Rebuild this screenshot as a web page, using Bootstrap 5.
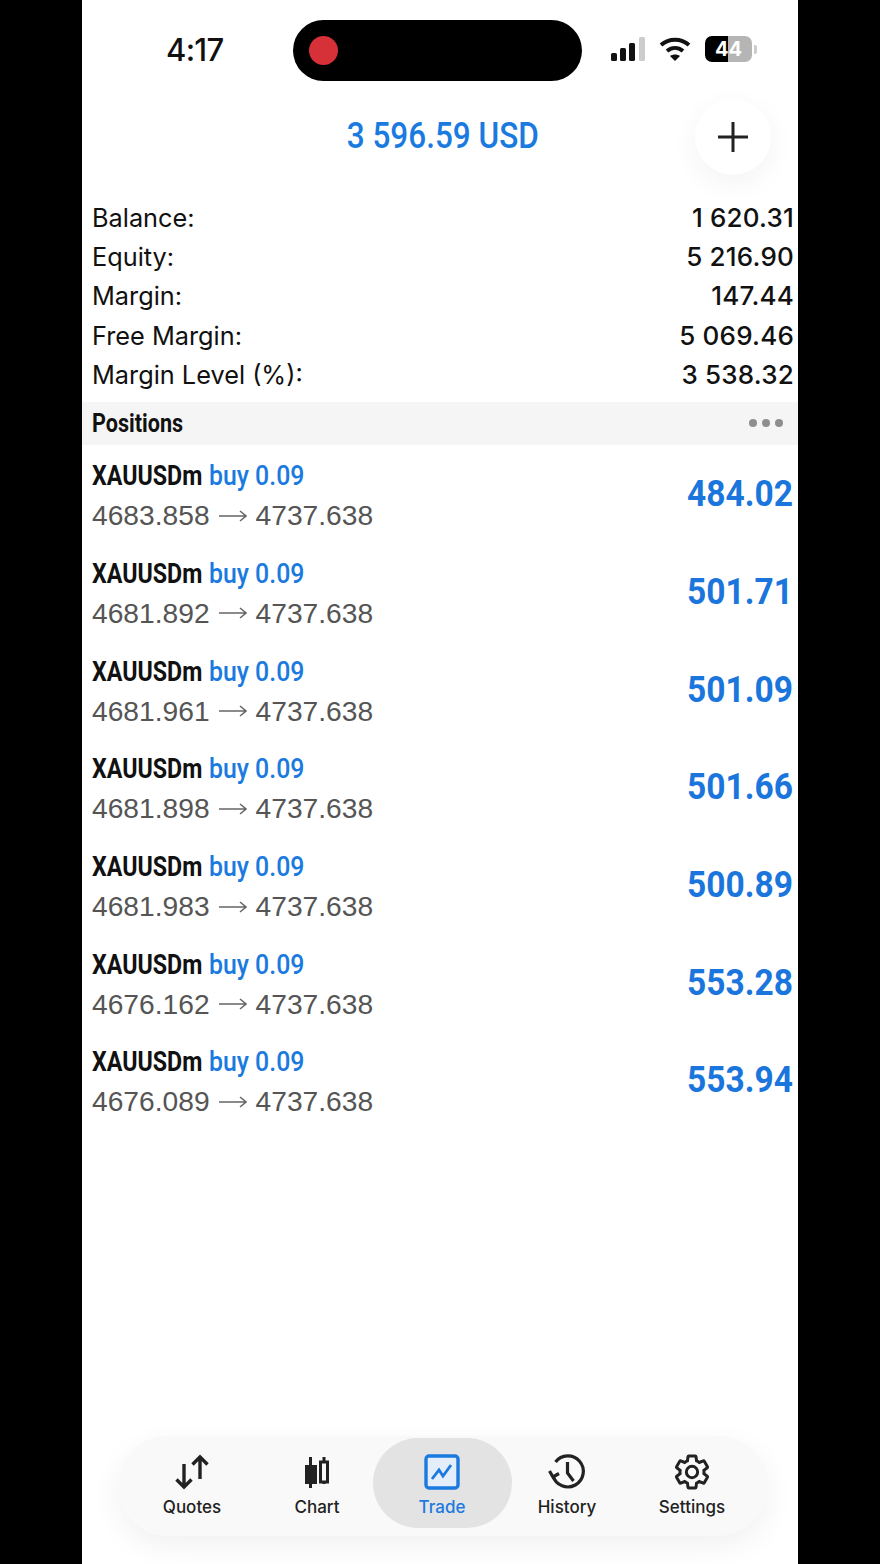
<!DOCTYPE html>
<html lang="en">
  <head>
    <meta charset="UTF-8" />
    <meta name="viewport" content="width=device-width, initial-scale=1.0" />
    <title>Trade</title>
    <link href="https://cdn.jsdelivr.net/npm/bootstrap@5.3.0/dist/css/bootstrap.min.css" rel="stylesheet" />
    <style>
      html, body { height: 100%; }
      body { background: #000; overflow: hidden; font-family: "Liberation Sans", Arial, sans-serif; }
      .phone { width: 716px; height: 1564px; margin-left: 82px; background: #fff; color: #111; }
      .status-bar { height: 100px; padding: 20px 38px 19px 84px; }
      .clock { width: 127px; height: 59px; font: 500 31px Inter, sans-serif; letter-spacing: -.7px; }
      .island { width: 289px; height: 61px; border-radius: 31px; background: #000; padding-left: 16px; }
      .rec-dot { width: 29px; height: 29px; border-radius: 50%; background: #d63038; }
      .status-icons { height: 58px; margin-left: 29px; gap: 12px; }
      .batt-wrap { margin-left: 2px; }
      .batt { width: 47px; height: 26px; border-radius: 7px; background: linear-gradient(90deg, #000 48%, #b5b5b5 48%); color: #fff; font: 700 20px/26px Inter, sans-serif; text-align: center; }
      .batt-tip { width: 3px; height: 9px; background: #ccc; border-radius: 0 2px 2px 0; margin-left: 2px; }
      .head-row { height: 72px; padding-left: 251px; }
      .total { width: 219px; white-space: nowrap; font: 500 36px Roboto, sans-serif; color: #1a7ae0; transform: scaleX(.875); }
      .add-btn { width: 76px; height: 76px; border: 0; border-radius: 50%; background: #fff; box-shadow: 0 8px 28px rgba(0, 0, 0, .05); padding: 0; margin: 2px 0 0 143px; }
      .summary { padding: 20px 5px 0 10px; margin-top: 6px; }
      .sum-line { height: 39.2px; font: 400 25.3px/39px Inter, sans-serif; }
      .sum-val { font-size: 26px; letter-spacing: .2px; font-weight: 500; margin-right: -1px; }
      .pos-head { height: 43px; margin-top: 8px; background: #f5f5f5; padding: 0 15px 0 10px; }
      .pos-title { font: 700 26px Roboto, sans-serif; transform: scaleX(.83); transform-origin: left; width: 91px; white-space: nowrap; }
      .dots { gap: 5px; }
      .dots i { width: 8px; height: 8px; border-radius: 50%; background: #8e8e8e; }
      .pos-list { padding-top: 2px; }
      .pos-row { height: 97.7px; padding: 0 5px 0 10px; }
      .sym { gap: 7px; height: 39px; margin-top: 1px; white-space: nowrap; font: 700 27px/39px Roboto, sans-serif; }
      .sym-name { width: 110px; transform: scaleX(.86); transform-origin: left; }
      .buy { width: 95px; font-weight: 500; color: #1a7ae0; transform: scaleX(.92); transform-origin: left; }
      .rate { gap: 9px; font: 400 28.2px/39px "Liberation Sans", Arial, sans-serif; color: #555; }
      .profit { white-space: nowrap; text-align: right; font: 700 37px Roboto, sans-serif; color: #1a75dc; margin-top: -4px; }
      .profit span { display: inline-block; transform: scaleX(.905); transform-origin: right; }
      .tabbar { margin: 0 30px 28px 36px; height: 100px; border-radius: 50px; background: #f9f9f9; box-shadow: 0 10px 30px rgba(0, 0, 0, .06); padding: 2px 0 0 11.5px; }
      .tab { flex: 0 0 125px; height: 90px; gap: 5px; color: #222; font: 500 17px Inter, sans-serif; border-radius: 45px; padding-top: 2px; }
      .tab.on { flex: 0 0 139px; margin: 0 -7px; background: #e3e3e3; color: #1a7ae0; }
      .tab svg { width: 40px; height: 40px; }
    </style>
  </head>
  <body>
    <div class="phone d-flex flex-column">
      <!-- Status bar -->
      <div class="status-bar d-flex align-items-start">
        <div class="clock d-flex align-items-center">4:17</div>
        <div class="island d-flex align-items-center"><span class="rec-dot"></span></div>
        <div class="status-icons d-flex align-items-center">
          <svg width="36" height="24" viewBox="0 0 36 24">
            <rect x="0" y="16" width="6" height="8" rx="1.500" fill="#111" />
            <rect x="9" y="11" width="6" height="13" rx="1.500" fill="#111" />
            <rect x="18" y="6" width="6" height="18" rx="1.500" fill="#111" />
            <rect x="28" y="0" width="6" height="24" rx="1.500" fill="#ccc" />
          </svg>
          <svg width="32" height="24" viewBox="0 0 32 24" fill="none" stroke="#111" stroke-width="4">
            <path d="M2 8c8-7 20-7 28 0" />
            <path d="M8 14c5-4 11-4 16 0" />
            <path d="M16 24l-5-5c3-2 7-2 10 0z" fill="#111" stroke="none" />
          </svg>
          <div class="batt-wrap d-flex align-items-center">
            <div class="batt">44</div>
            <div class="batt-tip"></div>
          </div>
        </div>
      </div>

      <!-- Account total -->
      <div class="head-row d-flex align-items-center">
        <div class="total text-center">3 596.59 USD</div>
        <button class="add-btn d-flex align-items-center justify-content-center" type="button" aria-label="Add">
          <svg width="32" height="32" viewBox="0 0 32 32"><path d="M16 1v30M1 16h30" stroke="#222" stroke-width="3" /></svg>
        </button>
      </div>

      <!-- Account summary -->
      <div class="summary">
        <div class="sum-line d-flex justify-content-between"><span>Balance:</span><span class="sum-val">1 620.31</span></div>
        <div class="sum-line d-flex justify-content-between"><span>Equity:</span><span class="sum-val">5 216.90</span></div>
        <div class="sum-line d-flex justify-content-between"><span>Margin:</span><span class="sum-val">147.44</span></div>
        <div class="sum-line d-flex justify-content-between"><span>Free Margin:</span><span class="sum-val">5 069.46</span></div>
        <div class="sum-line d-flex justify-content-between"><span>Margin Level (%):</span><span class="sum-val">3 538.32</span></div>
      </div>

      <!-- Positions -->
      <div class="pos-head d-flex align-items-center justify-content-between">
        <span class="pos-title">Positions</span>
        <span class="dots d-flex"><i></i><i></i><i></i></span>
      </div>
      <div class="pos-list flex-grow-1" id="posList"></div>

      <!-- Tab bar -->
      <nav class="tabbar d-flex align-items-start">
        <div class="tab d-flex flex-column align-items-center justify-content-center">
          <svg viewBox="0 0 40 40" fill="none" stroke="#222" stroke-width="3.400">
            <path d="M12 12v23M4.500 27.500l7.500 7.500 7.500-7.500" />
            <path d="M28 27V5M20.500 12.500l7.500-7.500 7.500 7.500" />
          </svg>
          <span>Quotes</span>
        </div>
        <div class="tab d-flex flex-column align-items-center justify-content-center">
          <svg viewBox="0 0 40 40" fill="none" stroke="#222" stroke-width="3">
            <path d="M13.500 5v31M27 5v27" />
            <rect x="9" y="14" width="10" height="17" fill="#222" stroke-width="2" />
            <rect x="23.500" y="10" width="7" height="20" fill="#f9f9f9" />
          </svg>
          <span>Chart</span>
        </div>
        <div class="tab on d-flex flex-column align-items-center justify-content-center">
          <svg viewBox="0 0 40 40" fill="none" stroke="#1a7ae0" stroke-width="3.400">
            <rect x="4" y="4" width="32" height="32" rx="3" fill="#e3eefa" />
            <path d="M10 27l7-9 4 6 8-11" stroke-width="2.800" />
          </svg>
          <span>Trade</span>
        </div>
        <div class="tab d-flex flex-column align-items-center justify-content-center">
          <svg viewBox="0 0 40 40" fill="none" stroke="#222" stroke-width="3.200">
            <path d="M6 24A15.500 15.500 0 1 0 8.500 10" />
            <path d="M2.500 19l3.500 6 6-3.500" />
            <path d="M20.500 10v11l6 8" />
          </svg>
          <span>History</span>
        </div>
        <div class="tab d-flex flex-column align-items-center justify-content-center">
          <svg viewBox="0 0 24 24" fill="none" stroke="#222" stroke-width="1.800">
            <circle cx="12" cy="12" r="3.400" />
            <path d="M19.140 12.940c.04-.3.06-.61.06-.94 0-.32-.02-.64-.07-.94l2.030-1.580c.18-.14.23-.41.12-.61l-1.920-3.320c-.12-.22-.37-.29-.59-.22l-2.390.96c-.5-.38-1.030-.7-1.620-.94l-.36-2.540c-.04-.24-.24-.41-.48-.41h-3.840c-.24 0-.43.17-.47.41l-.36 2.540c-.59.24-1.130.57-1.620.94l-2.390-.96c-.22-.08-.47 0-.59.22L2.740 8.870c-.12.21-.08.47.12.61l2.030 1.580c-.05.3-.09.63-.09.94s.02.64.07.94l-2.030 1.580c-.18.14-.23.41-.12.61l1.920 3.320c.12.22.37.29.59.22l2.390-.96c.5.38 1.030.7 1.620.94l.36 2.540c.05.24.24.41.48.41h3.840c.24 0 .44-.17.47-.41l.36-2.540c.59-.24 1.130-.56 1.620-.94l2.390.96c.22.08.47 0 .59-.22l1.920-3.320c.12-.22.07-.47-.12-.61l-2.010-1.580z" />
          </svg>
          <span>Settings</span>
        </div>
      </nav>
    </div>

    <script src="https://cdn.jsdelivr.net/npm/bootstrap@5.3.0/dist/js/bootstrap.bundle.min.js"></script>
    <script>
      const positions = [
        ["4683.858", "484.02"],
        ["4681.892", "501.71"],
        ["4681.961", "501.09"],
        ["4681.898", "501.66"],
        ["4681.983", "500.89"],
        ["4676.162", "553.28"],
        ["4676.089", "553.94"],
      ];
      const arrow = `<svg width="28" height="14" viewBox="0 0 28 14" fill="none" stroke="#666" stroke-width="1.500"><path d="M0 7h27M21 2l6 5-6 5" /></svg>`;
      document.getElementById("posList").innerHTML = positions
        .map(
          (p) => `
          <div class="pos-row d-flex justify-content-between align-items-center">
            <div>
              <div class="sym d-flex"><span class="sym-name">XAUUSDm</span><span class="buy">buy 0.09</span></div>
              <div class="rate d-flex align-items-center"><span>${p[0]}</span>${arrow}<span>4737.638</span></div>
            </div>
            <div class="profit"><span>${p[1]}</span></div>
          </div>`
        )
        .join("");
    </script>
  </body>
</html>
